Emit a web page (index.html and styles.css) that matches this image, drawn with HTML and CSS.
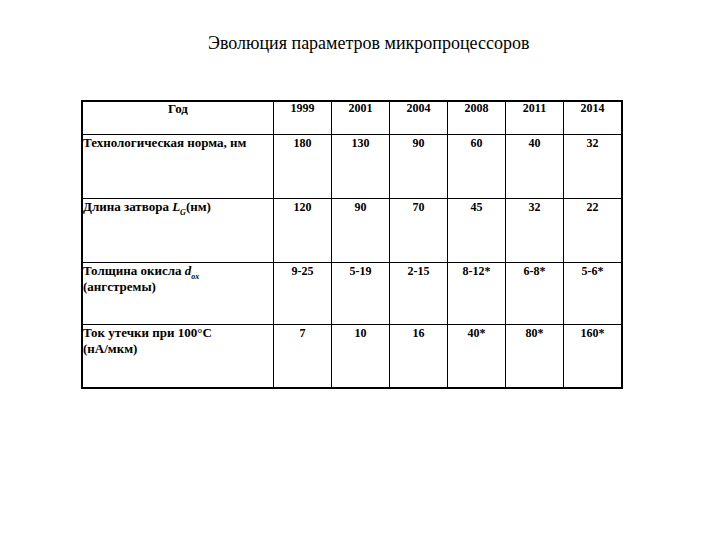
FILE: index.html
```html
<!DOCTYPE html>
<html>
<head>
<meta charset="utf-8">
<link rel="stylesheet" href="styles.css">
</head>
<body>
<div class="slide">
  <h1 class="title">Эволюция параметров микропроцессоров</h1>
  <table class="data">
    <tr class="head">
      <td class="label center">Год</td>
      <td>1999</td><td>2001</td><td>2004</td><td>2008</td><td>2011</td><td>2014</td>
    </tr>
    <tr class="r1">
      <td class="label">Технологическая норма, нм</td>
      <td>180</td><td>130</td><td>90</td><td>60</td><td>40</td><td>32</td>
    </tr>
    <tr class="r2">
      <td class="label">Длина затвора <i>L</i><sub><i>G</i></sub>(нм)</td>
      <td>120</td><td>90</td><td>70</td><td>45</td><td>32</td><td>22</td>
    </tr>
    <tr class="r3">
      <td class="label">Толщина окисла <i>d</i><sub><i>ox</i></sub><br>(ангстремы)</td>
      <td>9-25</td><td>5-19</td><td>2-15</td><td>8-12*</td><td>6-8*</td><td>5-6*</td>
    </tr>
    <tr class="r4">
      <td class="label">Ток утечки при 100°C<br>(нА/мкм)</td>
      <td>7</td><td>10</td><td>16</td><td>40*</td><td>80*</td><td>160*</td>
    </tr>
  </table>
</div>
</body>
</html>
```
FILE: styles.css
```css
html, body {
  margin: 0;
  padding: 0;
  background: #ffffff;
}
.slide {
  width: 720px;
  height: 540px;
  padding-top: 32px;
  box-sizing: border-box;
  font-family: "Liberation Serif", "Times New Roman", serif;
  color: #000;
}
.title {
  margin: 0 0 0 208px;
  font-family: "Liberation Serif", "Times New Roman", serif;
  font-size: 18px;
  font-weight: normal;
  line-height: 22px;
  height: 68px;
}
.data {
  margin-left: 81px;
  border-collapse: collapse;
  border: 2px solid #000;
  font-family: "Liberation Serif", "Times New Roman", serif;
  font-size: 12px;
  font-weight: bold;
  table-layout: fixed;
  width: 541px;
}
.data td {
  border: 1px solid #000;
  vertical-align: top;
  text-align: center;
  padding: 0;
  width: 57px;
  line-height: 16px;
  white-space: nowrap;
}
.data td.label {
  width: 190px;
  text-align: left;
  padding-left: 0;
  font-size: 13px;
}
.data td.label.center {
  text-align: center;
}
.data sub {
  font-size: 8px;
  line-height: 0;
}
.head td { height: 32px; line-height: 13px; }
.r1 td { height: 63px; }
.r2 td { height: 63px; }
.r3 td { height: 61px; }
.r4 td { height: 62px; }
```
